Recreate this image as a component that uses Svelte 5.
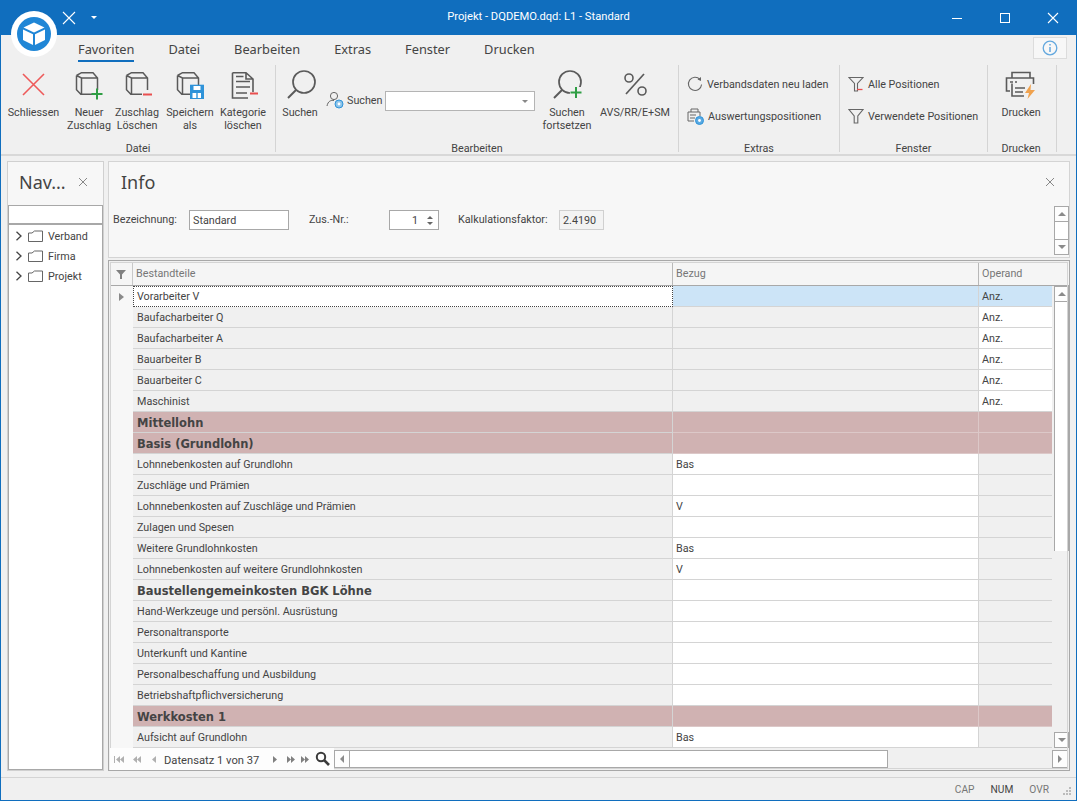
<script>
  const rows = [
    { t: 'Vorarbeiter V', k: 'sel', op: 'Anz.' },
    { t: 'Baufacharbeiter Q', k: 'a', op: 'Anz.' },
    { t: 'Baufacharbeiter A', k: 'a', op: 'Anz.' },
    { t: 'Bauarbeiter B', k: 'a', op: 'Anz.' },
    { t: 'Bauarbeiter C', k: 'a', op: 'Anz.' },
    { t: 'Maschinist', k: 'a', op: 'Anz.' },
    { t: 'Mittellohn', k: 'g' },
    { t: 'Basis (Grundlohn)', k: 'g' },
    { t: 'Lohnnebenkosten auf Grundlohn', k: 'b', bz: 'Bas' },
    { t: 'Zuschläge und Prämien', k: 'b' },
    { t: 'Lohnnebenkosten auf Zuschläge und Prämien', k: 'b', bz: 'V' },
    { t: 'Zulagen und Spesen', k: 'b' },
    { t: 'Weitere Grundlohnkosten', k: 'b', bz: 'Bas' },
    { t: 'Lohnnebenkosten auf weitere Grundlohnkosten', k: 'b', bz: 'V' },
    { t: 'Baustellengemeinkosten BGK Löhne', k: 'h' },
    { t: 'Hand-Werkzeuge und persönl. Ausrüstung', k: 'b' },
    { t: 'Personaltransporte', k: 'b' },
    { t: 'Unterkunft und Kantine', k: 'b' },
    { t: 'Personalbeschaffung und Ausbildung', k: 'b' },
    { t: 'Betriebshaftpflichversicherung', k: 'b' },
    { t: 'Werkkosten 1', k: 'g' },
    { t: 'Aufsicht auf Grundlohn', k: 'b', bz: 'Bas' }
  ];
  const tabs = ['Favoriten', 'Datei', 'Bearbeiten', 'Extras', 'Fenster', 'Drucken'];
  const tree = ['Verband', 'Firma', 'Projekt'];
</script>

{#snippet cube(tx)}
  <path transform="translate({tx} 0)" d="M.5 3.5 L5.5 .7 H17 L21.5 6 V18 M.5 3.5 V17.7 L4.8 22.2 H16 M.5 3.5 L5.5 6 H21.5 M5.5 6 V22.2" fill="none" stroke="#5a5a5a" stroke-width="1.5"/>
{/snippet}

{#snippet mag(cx, cy, x2, y2)}
  <circle cx={cx} cy={cy} r="11" fill="none" stroke="#5a5a5a" stroke-width="1.7"/>
  <path d="M{cx - 8} {cy + 8} L{x2} {y2}" stroke="#5a5a5a" stroke-width="1.9"/>
{/snippet}

<div class="window">
  <header class="titlebar">
    <svg class="qa" width="14" height="14" viewBox="0 0 14 14"><path d="M1 1 L13 13 M13 1 L1 13" stroke="#fff" stroke-width="1.1"/></svg>
    <span class="qa-drop"></span>
    <span class="title">Projekt - DQDEMO.dqd: L1 - Standard</span>
    <div class="controls">
      <svg width="48" height="34" viewBox="0 0 48 34"><path d="M19 17.5 H29" stroke="#fff" stroke-width="1"/></svg>
      <svg width="48" height="34" viewBox="0 0 48 34"><rect x="19.5" y="12.5" width="9" height="9" fill="none" stroke="#fff" stroke-width="1"/></svg>
      <svg width="48" height="34" viewBox="0 0 48 34"><path d="M19 12 L29 22 M29 12 L19 22" stroke="#fff" stroke-width="1.1"/></svg>
    </div>
  </header>

  <svg class="logo" width="50" height="48" viewBox="0 0 50 48">
    <circle cx="25" cy="24" r="23" fill="#fff"/>
    <circle cx="25" cy="24" r="17" fill="#1f86d6"/>
    <path d="M25 12.5 L35.5 17.5 L25 22.5 L14.5 17.5 Z" fill="#fff"/>
    <path d="M14 19.5 L24 24.3 V35 L14 30 Z M36 19.5 L26 24.3 V35 L36 30 Z" fill="#fff"/>
  </svg>

  <nav class="tabs">
    {#each tabs as tab, i}
      <span class="tab" class:active={i === 0}>{tab}</span>
    {/each}
    <button class="info-btn" aria-label="Info">
      <svg width="16" height="16" viewBox="0 0 16 16"><circle cx="8" cy="8" r="6.8" fill="none" stroke="#64a8de" stroke-width="1.3"/><path d="M8 7 V12 M8 4 V5.6" stroke="#64a8de" stroke-width="1.5"/></svg>
    </button>
  </nav>

  <section class="ribbon">
    <div class="group g-datei">
      <div class="group-body">
        <div class="big w65">
          <svg class="ic" width="26" height="26" viewBox="0 0 26 26"><path d="M2 2 L23 23 M23 2 L2 23" stroke="#ee5a5a" stroke-width="1.6"/></svg>
          <span>Schliessen</span>
        </div>
        <div class="big w46">
          <svg class="ic" width="28" height="26" viewBox="0 0 28 26">
            {@render cube(1)}
            <path d="M22 16.5 V27.5 M16.5 22 H27.5" stroke="#2f9e44" stroke-width="2"/>
          </svg>
          <span>Neuer<br />Zuschlag</span>
        </div>
        <div class="big w50">
          <svg class="ic" width="28" height="26" viewBox="0 0 28 26">
            {@render cube(3)}
            <path d="M20 22.5 H29" stroke="#e94f4f" stroke-width="2"/>
          </svg>
          <span>Zuschlag<br />Löschen</span>
        </div>
        <div class="big w56">
          <svg class="ic" width="28" height="26" viewBox="0 0 28 26">
            {@render cube(1)}
            <path d="M14 12.7 H28 V27 H14 Z" fill="#2f93d9"/>
            <path d="M17.5 14 H24.5 V18 H17.5 Z M16.5 21 H25 V26 H16.5 Z" fill="#fff"/>
            <path d="M21 21 V26" stroke="#2f93d9" stroke-width="1.4"/>
          </svg>
          <span>Speichern<br />als</span>
        </div>
        <div class="big w50">
          <svg class="ic" width="26" height="26" viewBox="0 0 26 26">
            <path d="M2.5 .7 H16 L23 7 V20 M16 .7 V7 H23 M2.5 .7 V26 H18" fill="none" stroke="#5a5a5a" stroke-width="1.6"/>
            <path d="M6 4.5 H13.5 M6 9.5 H20 M6 15 H20 M6 21 H17" stroke="#5a5a5a" stroke-width="1.5"/>
            <path d="M20 21.5 H28" stroke="#e94f4f" stroke-width="2"/>
          </svg>
          <span>Kategorie<br />löschen</span>
        </div>
      </div>
      <div class="group-label">Datei</div>
    </div>

    <div class="group g-bearb">
      <div class="group-body">
        <div class="big w48">
          <svg class="ic" width="32" height="30" viewBox="0 0 32 30">{@render mag(20, 12, 4, 28)}</svg>
          <span>Suchen</span>
        </div>
        <div class="combo">
          <svg width="18" height="18" viewBox="0 0 18 18">
            <circle cx="8" cy="5" r="3.6" fill="none" stroke="#666" stroke-width="1"/>
            <path d="M1 15 C2 10 5 9 8 9.5" fill="none" stroke="#666" stroke-width="1"/>
            <circle cx="13" cy="13" r="4" fill="#8cc4ea" stroke="#2f93d9" stroke-width="1"/>
            <circle cx="13" cy="13" r="1.4" fill="#fff"/>
          </svg>
          <span class="combo-label">Suchen</span>
          <div class="combo-input"><i class="combo-arrow"></i></div>
        </div>
        <div class="big w54">
          <svg class="ic" width="32" height="30" viewBox="0 0 32 30">
            {@render mag(19, 12, 3, 28)}
            <rect x="19" y="17" width="12" height="12" fill="#f0f0f0"/>
            <path d="M25 17 V28 M19.5 22.5 H30.5" stroke="#2f9e44" stroke-width="2"/>
          </svg>
          <span>Suchen<br />fortsetzen</span>
        </div>
        <div class="big w82">
          <svg class="ic" width="26" height="26" viewBox="0 0 26 26">
            <path d="M22 2 L4 22" stroke="#5a5a5a" stroke-width="1.7"/>
            <circle cx="7" cy="6" r="4" fill="none" stroke="#5a5a5a" stroke-width="1.6"/>
            <circle cx="20" cy="19" r="4" fill="none" stroke="#5a5a5a" stroke-width="1.6"/>
          </svg>
          <span>AVS/RR/E+SM</span>
        </div>
      </div>
      <div class="group-label">Bearbeiten</div>
    </div>

    <div class="group g-extras">
      <div class="group-body stack">
        <div class="line">
          <svg width="16" height="16" viewBox="0 0 16 16"><path d="M13 3.5 A6.6 6.6 0 1 0 14.6 8.5" fill="none" stroke="#666" stroke-width="1.1"/><path d="M10.5 3.5 L14 1 V5 Z" fill="#666"/></svg>
          <span>Verbandsdaten neu laden</span>
        </div>
        <div class="line">
          <svg width="17" height="17" viewBox="0 0 17 17">
            <path d="M4 4 V1 H11 V4 M1 13 V4 H13 V8 M1 13 H7" fill="none" stroke="#666" stroke-width="1"/>
            <path d="M3 7 H9 M3 10 H8" stroke="#666"/>
            <circle cx="12.5" cy="12.5" r="4" fill="#59a9e2" stroke="#2f93d9"/>
            <circle cx="12.5" cy="12.5" r="1.4" fill="#fff"/>
          </svg>
          <span>Auswertungspositionen</span>
        </div>
      </div>
      <div class="group-label">Extras</div>
    </div>

    <div class="group g-fenster">
      <div class="group-body stack">
        <div class="line">
          <svg width="16" height="16" viewBox="0 0 16 16">
            <path d="M1 1.5 H15 L9.5 7.5 V15 H6.5 V7.5 Z" fill="none" stroke="#666" stroke-width="1.1"/>
            <path d="M9 13.5 H14.5" stroke="#e94f4f" stroke-width="1.3"/>
          </svg>
          <span>Alle Positionen</span>
        </div>
        <div class="line">
          <svg width="16" height="16" viewBox="0 0 16 16"><path d="M1 1.5 H15 L9.8 8 V15 H6.2 V8 Z" fill="none" stroke="#666" stroke-width="1.1"/></svg>
          <span>Verwendete Positionen</span>
        </div>
      </div>
      <div class="group-label">Fenster</div>
    </div>

    <div class="group g-druck">
      <div class="group-body">
        <div class="big full">
          <svg class="ic" width="32" height="28" viewBox="0 0 32 28">
            <path d="M7 7 V1.5 H25 V7 M5 20 H1.5 V7 H28.5 V13 M7 12.5 V25 H19" fill="none" stroke="#5a5a5a" stroke-width="1.6"/>
            <path d="M5 11 H8 M10 11 H12 M10 17 H20 M10 21 H18" stroke="#5a5a5a" stroke-width="1.4"/>
            <path d="M26 13 L20 22 H24 L22.5 28 L30 19 H25.5 Z" fill="#f0a24e"/>
          </svg>
          <span>Drucken</span>
        </div>
      </div>
      <div class="group-label">Drucken</div>
    </div>
  </section>

  <main class="main">
    <aside class="navpanel">
      <div class="nav-head">
        <span class="panel-title">Nav...</span>
        <svg width="10" height="10" viewBox="0 0 10 10"><path d="M1 1 L9 9 M9 1 L1 9" stroke="#888" stroke-width="1"/></svg>
      </div>
      <div class="nav-search"></div>
      <div class="nav-tree">
        {#each tree as item}
          <div class="tree-row">
            <svg width="8" height="10" viewBox="0 0 8 10"><path d="M1.5 .8 L6 5 L1.5 9.2" fill="none" stroke="#444" stroke-width="1.3"/></svg>
            <svg class="folder" width="15" height="12" viewBox="0 0 15 12"><path d="M.5 3 H4 L6.5 1 H14.5 V11.5 H.5 Z" fill="none" stroke="#666" stroke-width="1"/></svg>
            <span>{item}</span>
          </div>
        {/each}
      </div>
    </aside>

    <div class="content">
      <section class="infopanel">
        <div class="info-head">
          <span class="panel-title">Info</span>
          <svg width="10" height="10" viewBox="0 0 10 10"><path d="M1 1 L9 9 M9 1 L1 9" stroke="#888" stroke-width="1"/></svg>
        </div>
        <div class="info-form">
          <span class="f-l1">Bezeichnung:</span>
          <div class="f-input">Standard</div>
          <span class="f-l2">Zus.-Nr.:</span>
          <div class="f-spin">
            <span>1</span>
            <div class="spin-arrows"><i class="up"></i><i class="down"></i></div>
          </div>
          <span class="f-l3">Kalkulationsfaktor:</span>
          <div class="f-ro">2.4190</div>
          <div class="mini-scroll">
            <div class="sb-btn"><i class="tri up"></i></div>
            <div class="mini-thumb"></div>
            <div class="sb-btn"><i class="tri down"></i></div>
          </div>
        </div>
      </section>

      <section class="gridpanel">
        <div class="grid-inner">
          <div class="grid-head">
            <div class="h-ind">
              <svg width="10" height="9" viewBox="0 0 10 9"><path d="M0 0 H10 L6 4.5 V9 H4 V4.5 Z" fill="#808080"/></svg>
            </div>
            <div class="h-c c1">Bestandteile</div>
            <div class="h-c c2">Bezug</div>
            <div class="h-c c3">Operand</div>
          </div>
          <div class="grid-mid">
            <div class="rows">
              {#each rows as r, i}
                <div class="row {r.k}">
                  <div class="ind">{#if i === 0}<i class="ind-arrow"></i>{/if}</div>
                  <div class="cell c1">{r.t}</div>
                  <div class="cell c2">{r.bz ?? ''}</div>
                  <div class="cell c3">{r.op ?? ''}</div>
                </div>
              {/each}
            </div>
            <div class="vscroll">
              <div class="sb-btn"><i class="tri up"></i></div>
              <div class="v-thumb"></div>
              <div class="v-track"></div>
              <div class="sb-btn"><i class="tri down"></i></div>
            </div>
          </div>
          <div class="grid-foot">
            <div class="pager">
              <span class="p-icons">
                <svg width="46" height="9" viewBox="0 0 46 9" fill="#b0b0b0">
                  <rect x="1" y="1" width="1" height="7"/><path d="M7 1 L3 4.5 L7 8 Z M11 1 L7 4.5 L11 8 Z"/>
                  <path d="M24 1 L20 4.5 L24 8 Z M28 1 L24 4.5 L28 8 Z"/>
                  <path d="M43 1 L39 4.5 L43 8 Z"/>
                </svg>
              </span>
              <span class="p-text">Datensatz 1 von 37</span>
              <span class="p-icons right">
                <svg width="38" height="9" viewBox="0 0 38 9" fill="#808080">
                  <path d="M1 1 L5 4.5 L1 8 Z"/>
                  <path d="M15 1 L19 4.5 L15 8 Z M19 1 L23 4.5 L19 8 Z"/>
                  <path d="M29 1 L33 4.5 L29 8 Z M33 1 L37 4.5 L33 8 Z"/>
                </svg>
              </span>
              <svg class="p-mag" width="15" height="15" viewBox="0 0 15 15"><circle cx="6" cy="6" r="4.2" fill="none" stroke="#3a3a3a" stroke-width="2"/><path d="M9 9 L14 14" stroke="#3a3a3a" stroke-width="2.6"/></svg>
            </div>
            <div class="hscroll">
              <div class="sb-btn h"><i class="tri left"></i></div>
              <div class="h-thumb"></div>
              <div class="h-track"></div>
              <div class="sb-btn h"><i class="tri right"></i></div>
            </div>
          </div>
        </div>
      </section>
    </div>
  </main>

  <footer class="status">
    <span class="st dim">CAP</span>
    <span class="st">NUM</span>
    <span class="st dim">OVR</span>
    <svg class="grip" width="10" height="10" viewBox="0 0 10 10" fill="#bbb"><rect x="7" y="1" width="2" height="2"/><rect x="4" y="4" width="2" height="2"/><rect x="7" y="4" width="2" height="2"/><rect x="1" y="7" width="2" height="2"/><rect x="4" y="7" width="2" height="2"/><rect x="7" y="7" width="2" height="2"/></svg>
  </footer>
</div>

<style>
  :global(body) { margin: 0; background: #f0f0f0; }
  .window {
    position: relative; width: 1077px; height: 801px; box-sizing: border-box; overflow: hidden;
    border: 1px solid #106ebe; border-top: 0; background: #f0f0f0; display: flex; flex-direction: column;
    font-family: Roboto, sans-serif; font-size: 10.75px; color: #444;
  }
  .titlebar { height: 35px; flex: none; background: #106ebe; color: #fff; position: relative; display: flex; align-items: center; }
  .qa { margin-left: 61px; }
  .qa-drop { margin-left: 15px; width: 0; height: 0; border: 3px solid transparent; border-top: 3px solid #fff; border-bottom: 0; }
  .title { position: absolute; left: 0; right: 0; text-align: center; font-size: 11.2px; top: 9px; line-height: 16px; }
  .controls { margin-left: auto; display: flex; margin-right: -1px; padding-right: 0; }
  .controls svg { display: block; }
  .logo { position: absolute; left: 8px; top: 10px; overflow: visible; }

  .tabs { height: 30px; flex: none; display: flex; padding-left: 77px; gap: 34px; position: relative; align-items: flex-start; font-family: "Noto Sans", sans-serif; }
  .tab { font-size: 12.8px; line-height: 18px; margin-top: 5px; padding-bottom: 2px; height: 18px; color: #444; }
  .tab.active { border-bottom: 2px solid #106ebe; color: #444; }
  .info-btn { position: absolute; right: 9px; top: 2px; width: 34px; height: 22px; padding: 0; background: #f7f7f7; border: 1px solid #dcdcdc; display: flex; align-items: center; justify-content: center; }

  .ribbon { height: 91px; flex: none; display: flex; border-bottom: 2px solid #d8d8d8; box-sizing: border-box; padding-bottom: 2px; }
  .group { display: flex; flex-direction: column; border-right: 1px solid #d4d4d4; box-sizing: border-box; height: 87px; }
  .g-datei { width: 275px; }
  .g-bearb { width: 403px; }
  .g-extras { width: 161px; }
  .g-fenster { width: 148px; }
  .g-druck { width: 69px; padding-right: 2px; }
  .group-body { flex: 1; display: flex; min-height: 0; }
  .group-label { height: 12px; text-align: center; line-height: 17px; color: #444; white-space: nowrap; }
  .big { display: flex; flex-direction: column; align-items: center; text-align: center; line-height: 13px; white-space: nowrap; flex: none; }
  .big .ic { height: 30px; margin-top: 5px; margin-bottom: 6px; overflow: visible; }
  .w65 { width: 65px; } .w46 { width: 46px; } .w48 { width: 48px; } .w56 { width: 56px; } .w50 { width: 50px; } .w54 { width: 54px; } .w82 { width: 82px; }
  .full { width: 100%; }
  .combo { width: 216px; display: flex; align-items: flex-start; padding-top: 26px; box-sizing: border-box; padding-left: 2px; height: 60px; flex: none; }
  .combo-label { margin-left: 3px; line-height: 20px; width: 38px; }
  .combo-input { width: 150px; height: 20px; box-sizing: border-box; background: #fff; border: 1px solid #b4b4b4; position: relative; }
  .combo-arrow { position: absolute; right: 6px; top: 8px; border: 3px solid transparent; border-top: 3px solid #888; border-bottom: 0; }
  .stack { flex-direction: column; padding: 10px 0 0 8px; gap: 14px; }
  .line { display: flex; align-items: center; gap: 4px; height: 18px; white-space: nowrap; }
  .line svg { flex: none; }

  .main { flex: 1; min-height: 0; display: flex; gap: 4px; padding: 5px 6px 6px; box-sizing: border-box; }
  .navpanel { width: 97px; flex: none; box-sizing: border-box; border: 1px solid #d0d0d0; background: #f7f7f7; display: flex; flex-direction: column; }
  .panel-title { font-size: 18px; color: #444; line-height: 24px; font-family: "Noto Sans", sans-serif; }
  .nav-head { height: 40px; margin-bottom: 3px; flex: none; display: flex; align-items: center; padding-left: 11px; gap: 12px; }
  .nav-search { height: 17px; flex: none; background: #fff; border: 1px solid #a8a8a8; border-width: 1px 1px 2px; }
  .nav-tree { flex: 1; background: #fff; border: 1px solid #a8a8a8; border-top: 0; padding-top: 1px; }
  .tree-row { height: 20px; display: flex; align-items: center; padding-left: 6px; }
  .folder { margin-left: 5px; margin-right: 5px; }

  .content { flex: 1; min-width: 0; display: flex; flex-direction: column; gap: 2px; }
  .infopanel { height: 97px; flex: none; box-sizing: border-box; border: 1px solid #d4d4d4; background: #f7f7f7; display: flex; flex-direction: column; }
  .info-head { height: 40px; flex: none; display: flex; align-items: center; justify-content: space-between; padding: 0 14px 0 12px; }
  .info-form { flex: 1; display: flex; align-items: flex-start; padding: 8px 0 0 4px; position: relative; }
  .f-l1, .f-l2, .f-l3 { line-height: 20px; }
  .f-l1 { width: 76px; flex: none; }
  .f-input { width: 100px; height: 20px; box-sizing: border-box; border: 1px solid #a8a8a8; background: #fff; padding-left: 3px; line-height: 19px; flex: none; }
  .f-l2 { margin-left: 20px; width: 80px; flex: none; }
  .f-spin { width: 50px; height: 20px; box-sizing: border-box; border: 1px solid #a8a8a8; background: #fff; line-height: 19px; display: flex; justify-content: flex-end; flex: none; }
  .spin-arrows { width: 16px; display: flex; flex-direction: column; align-items: center; justify-content: center; gap: 3px; margin-left: 4px; }
  .spin-arrows i.up { border: 3px solid transparent; border-bottom: 3px solid #666; border-top: 0; }
  .spin-arrows i.down { border: 3px solid transparent; border-top: 3px solid #666; border-bottom: 0; }
  .f-l3 { margin-left: 19px; width: 101px; flex: none; }
  .f-ro { width: 45px; height: 20px; box-sizing: border-box; border: 1px solid #d0d0d0; background: #f3f3f3; line-height: 19px; padding-left: 3px; flex: none; }
  .mini-scroll { position: absolute; right: 0; top: 4px; width: 15px; display: flex; flex-direction: column; }
  .mini-thumb { height: 17px; background: #fff; border: 1px solid #a8a8a8; border-width: 0 1px; }
  .sb-btn { height: 16px; width: 15px; box-sizing: border-box; border: 1px solid #a8a8a8; background: #fdfdfd; display: flex; align-items: center; justify-content: center; flex: none; }
  .tri { width: 0; height: 0; border: 4px solid transparent; }
  .tri.up { border-top: 0; border-bottom: 4px solid #8a8a8a; }
  .tri.down { border-bottom: 0; border-top: 4px solid #8a8a8a; }
  .tri.left { border-left: 0; border-right: 4px solid #8a8a8a; }
  .tri.right { border-right: 0; border-left: 4px solid #8a8a8a; }

  .gridpanel { flex: 1; min-height: 0; box-sizing: border-box; border: 1px solid #a8a8a8; padding: 2px 0 0 0; background: #f0f0f0; outline: 1px solid #d4d4d4; outline-offset: -3px; }
  .grid-inner { height: 100%; display: flex; flex-direction: column; margin: 0 0 0 1px; }
  .grid-head { height: 23px; flex: none; display: flex; background: #f5f5f5; border-bottom: 1px solid #a8a8a8; box-sizing: border-box; }
  .h-ind { width: 23px; flex: none; display: flex; align-items: center; justify-content: center; border-right: 1px solid #c8c8c8; box-sizing: border-box; }
  .h-c { line-height: 21px; padding-left: 3px; color: #777; box-sizing: border-box; border-right: 1px solid #b8b8b8; }
  .h-c.c3 { border-right: 0; }
  .c1 { width: 540px; flex: none; }
  .c2 { width: 306px; flex: none; }
  .c3 { width: 73px; flex: none; }
  .grid-mid { flex: 1; min-height: 0; display: flex; }
  .rows { width: 942px; flex: none; display: flex; flex-direction: column; overflow: hidden; }
  .row { height: 21px; flex: none; display: flex; box-sizing: border-box; }
  .ind { width: 23px; flex: none; background: #f7f7f7; display: flex; align-items: center; justify-content: center; }
  .ind-arrow { border: 4px solid transparent; border-right: 0; border-left: 5px solid #8a8a8a; }
  .cell { box-sizing: border-box; height: 21px; line-height: 22px; padding-left: 4px; border-bottom: 1px solid #d4d4d4; border-right: 1px solid #d4d4d4; white-space: nowrap; overflow: hidden; background: #f0f0f0; color: #444; }
  .cell.c3 { border-right: 0; }
  .row.a .c3 { background: #fff; padding-left: 3px; }
  .row.b .c2, .row.h .c2 { background: #fff; padding-left: 3px; }
  .row.sel .c1 { background: #fff; outline: 1px dotted #444; outline-offset: -1px; border-color: transparent; }
  .row.sel .c2, .row.sel .c3 { background: #cce4f7; padding-left: 3px; }
  .row.g .cell { background: #d0b2b2; font-family: "DejaVu Sans", sans-serif; font-weight: 700; font-size: 11.5px; color: #444; border-color: #d4d4d4; }
  .row.g .c2, .row.g .c3 { border-color: #dcc8c8; }
  .row.h .c1 { font-family: "DejaVu Sans", sans-serif; font-weight: 700; font-size: 11.5px; }
  .vscroll { width: 15px; margin-left: 2px; flex: none; display: flex; flex-direction: column; }
  .v-thumb { height: 249px; flex: none; background: #fff; border: 1px solid #a8a8a8; border-width: 0 1px; box-sizing: border-box; }
  .v-track { flex: 1; background: #f0f0f0; }
  .grid-foot { height: 22px; flex: none; display: flex; align-items: center; background: #f0f0f0; }
  .pager { width: 224px; flex: none; height: 100%; background: #fdfdfd; display: flex; align-items: center; padding-left: 3px; box-sizing: border-box; position: relative; }
  .p-icons { display: flex; }
  .p-text { margin-left: 5px; margin-top: 2px; width: 100px; white-space: nowrap; color: #444; font-size: 11.2px; }
  .p-icons.right { margin-left: 8px; }
  .p-mag { position: absolute; right: 4px; top: 3px; }
  .hscroll { display: flex; flex: 1; height: 18px; margin-right: 1px; }
  .sb-btn.h { width: 16px; height: 18px; }
  .h-thumb { width: 538px; flex: none; background: #fff; border: 1px solid #a8a8a8; border-width: 1px 1px 1px 0; box-sizing: border-box; }
  .h-track { flex: 1; background: #f0f0f0; }

  .status { height: 23px; flex: none; display: flex; align-items: center; justify-content: flex-end; border-top: 1px solid #d4d4d4; position: relative; padding: 2px 27px 0 0; gap: 16px; box-sizing: border-box; font-size: 10.2px; }
  .st { color: #444; line-height: 22px; }
  .st.dim { color: #777; }
  .grip { position: absolute; right: 4px; bottom: 4px; }
</style>
